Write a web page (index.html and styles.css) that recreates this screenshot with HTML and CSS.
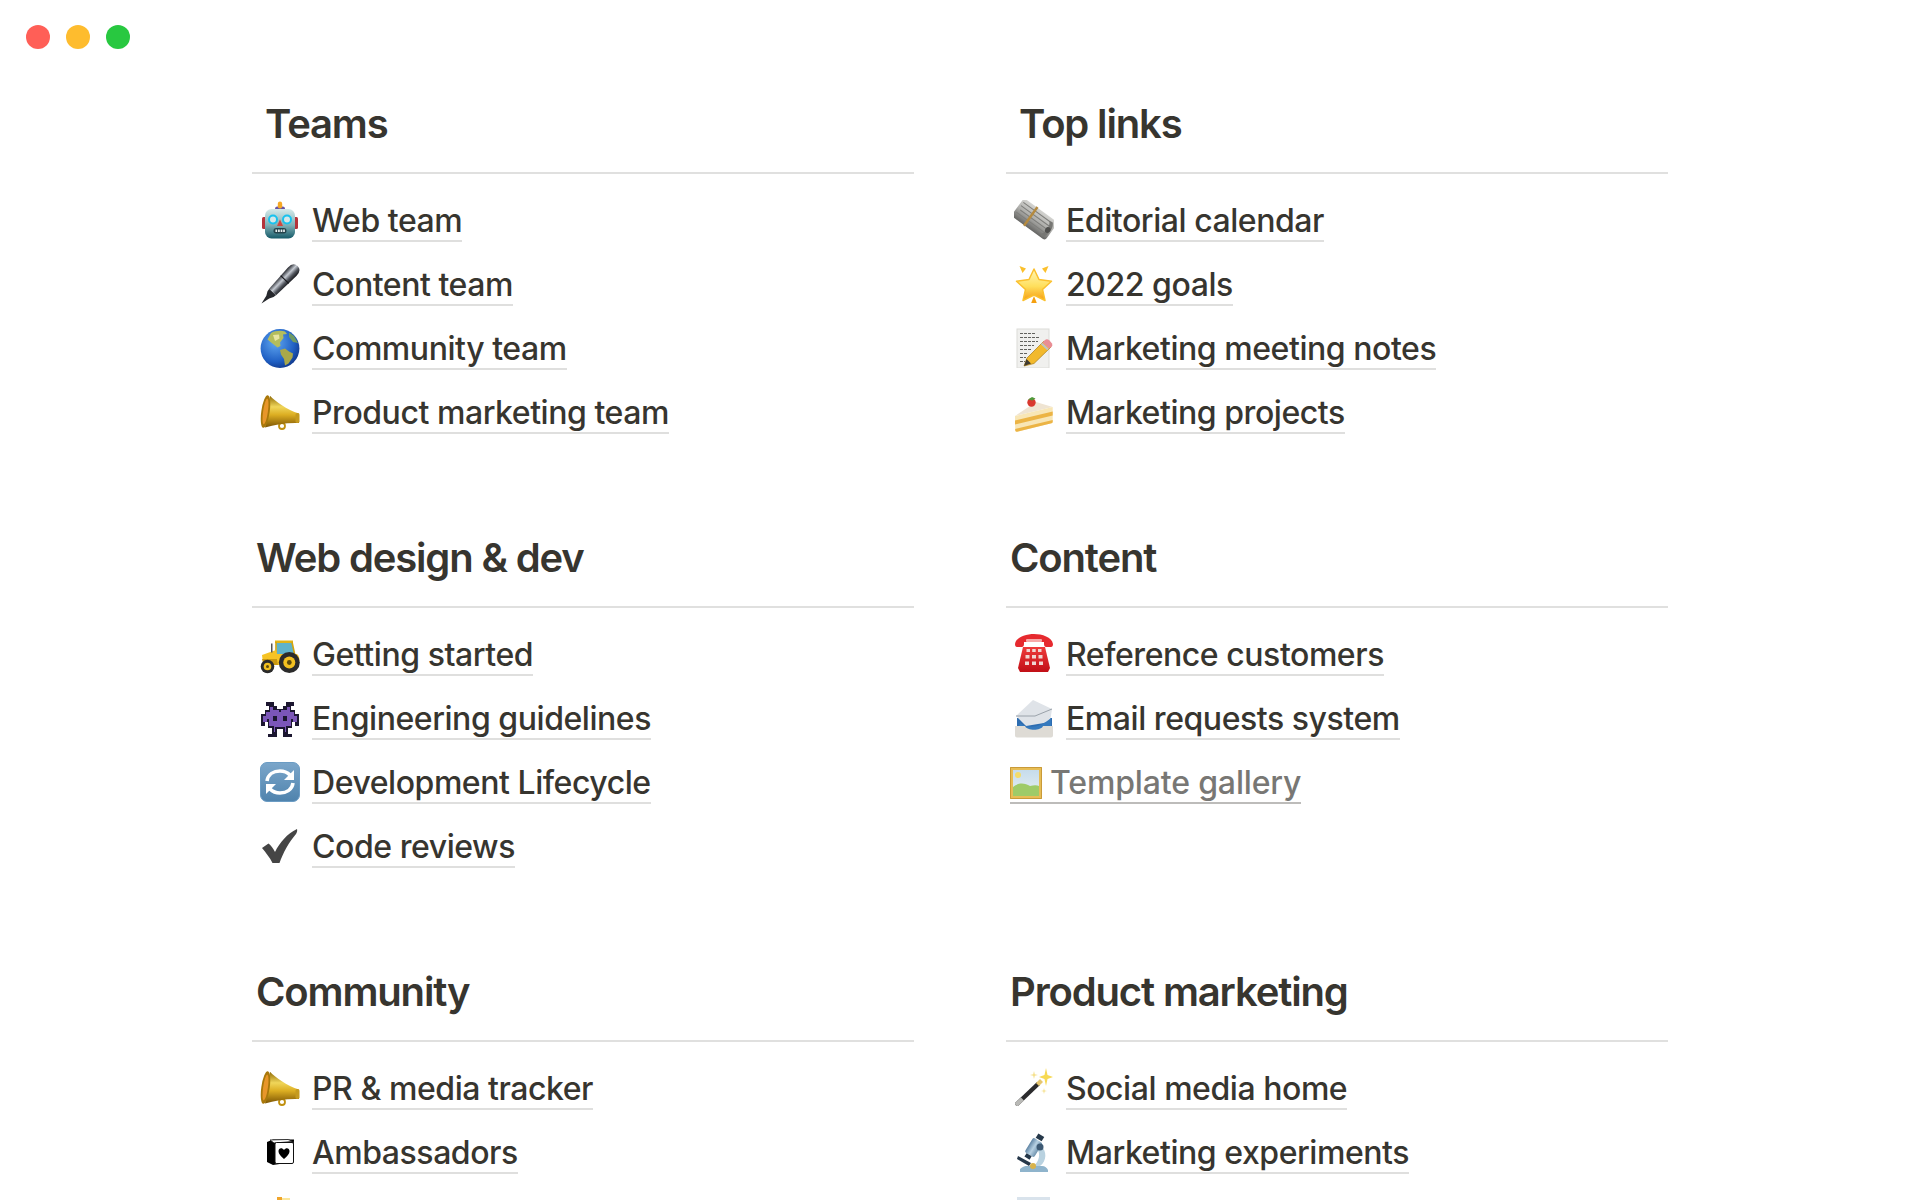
FILE: index.html
```html
<!DOCTYPE html>
<html lang="en">
<head>
<meta charset="utf-8">
<title>Marketing wiki</title>
<link rel="stylesheet" href="styles.css">
</head>
<body>
<svg class="sprite" aria-hidden="true">
<defs>
<linearGradient id="gHead" x1="0" y1="0" x2="0" y2="1"><stop offset="0" stop-color="#d6eaea"/><stop offset=".55" stop-color="#7fb0b6"/><stop offset="1" stop-color="#155a68"/></linearGradient>
<linearGradient id="gPen" x1="0" y1="0" x2="1" y2="0"><stop offset="0" stop-color="#23252b"/><stop offset=".4" stop-color="#c6cbd3"/><stop offset=".7" stop-color="#50545c"/><stop offset="1" stop-color="#17181c"/></linearGradient>
<radialGradient id="gGlobe" cx=".38" cy=".35" r=".75"><stop offset="0" stop-color="#5fa6f0"/><stop offset=".65" stop-color="#2060c4"/><stop offset="1" stop-color="#0d2f80"/></radialGradient>
<linearGradient id="gGold" x1="0" y1="0" x2="0" y2="1"><stop offset="0" stop-color="#8f6a06"/><stop offset=".35" stop-color="#f0d65a"/><stop offset=".6" stop-color="#dcae22"/><stop offset="1" stop-color="#7d5503"/></linearGradient>
<linearGradient id="gNews" x1="0" y1="0" x2="0" y2="1"><stop offset="0" stop-color="#d4d4d1"/><stop offset=".5" stop-color="#aeaeab"/><stop offset="1" stop-color="#666664"/></linearGradient>
<linearGradient id="gStar" x1="0" y1="0" x2="0" y2="1"><stop offset="0" stop-color="#fff6b8"/><stop offset=".55" stop-color="#ffdf5c"/><stop offset="1" stop-color="#f59c12"/></linearGradient>
<linearGradient id="gRefresh" x1="0" y1="0" x2="0" y2="1"><stop offset="0" stop-color="#7ba6ca"/><stop offset="1" stop-color="#4f83ad"/></linearGradient>
<linearGradient id="gPhone" x1="0" y1="0" x2="0" y2="1"><stop offset="0" stop-color="#ee3b3b"/><stop offset="1" stop-color="#c10f16"/></linearGradient>
<linearGradient id="gSky" x1="0" y1="0" x2="0" y2="1"><stop offset="0" stop-color="#c6dcec"/><stop offset="1" stop-color="#e6eff2"/></linearGradient>
<linearGradient id="gScope" x1="0" y1="0" x2="1" y2="0"><stop offset="0" stop-color="#5f84a4"/><stop offset=".5" stop-color="#b7d0e2"/><stop offset="1" stop-color="#6f93ae"/></linearGradient>
<symbol id="i-robot" viewBox="0 0 40 40">
<rect x="2" y="17" width="5" height="12" rx="1.500" fill="#b5333a"/><rect x="33" y="17" width="5" height="12" rx="1.500" fill="#b5333a"/>
<ellipse cx="20" cy="8.500" rx="5" ry="2.200" fill="#6a55a3"/><rect x="17.800" y="1.500" width="4.400" height="7" rx="2.200" fill="#f6a824"/>
<rect x="5" y="9" width="30" height="29.500" rx="6.500" fill="url(#gHead)"/>
<circle cx="13" cy="19.500" r="4" fill="#d3e8ea" stroke="#17c2ee" stroke-width="2"/><circle cx="27" cy="19.500" r="4" fill="#d3e8ea" stroke="#17c2ee" stroke-width="2"/>
<path d="M20 19.500l3 6.500h-6z" fill="#d2453f"/>
<rect x="13.500" y="28" width="13" height="5.500" rx="2.700" fill="#24434b"/>
<path d="M16.300 29.500v2.600M18.900 29.500v2.600M21.500 29.500v2.600M24 29.500v2.600" stroke="#e8f0f0" stroke-width="1.700"/>
</symbol>
<symbol id="i-pen" viewBox="0 0 40 40">
<g transform="translate(1.500 39.500) rotate(44)">
<path d="M0 0L-2 -9L-4.200 -13L-4.600 -16H4.600L4.200 -13L2 -9Z" fill="#26282d"/>
<path d="M-4.800 -16L-6 -44Q-6 -52 0 -52Q6 -52 6 -44L4.800 -16Z" fill="url(#gPen)"/>
<rect x="-5.600" y="-34" width="11.200" height="1.200" fill="#17181c"/>
</g>
</symbol>
<symbol id="i-globe" viewBox="0 0 40 40">
<circle cx="20" cy="20.500" r="19.400" fill="url(#gGlobe)"/>
<path d="M11 5C14 3 21 2 25 3.500L27 6L23 6.500L23.500 10L20 14.500L20.500 18L17.500 19.500L15 17.500L10.500 14L7.500 11.500Z" fill="#b4bd5c"/>
<path d="M13 7L19 6.500L19.500 10.500L15 13Z" fill="#e8e5a2"/>
<path d="M20 22L25 20.500L29 23.500L33 25.500L32.500 29.500L28.500 35.500L25 37.500L24 31L21 26.500Z" fill="#a9a84a"/>
<path d="M29 4.500L34 8L38 15L33 14L29 9Z" fill="#6f9a62"/>
</symbol>
<symbol id="i-mega" viewBox="0 0 40 40">
<circle cx="22" cy="34" r="3" fill="none" stroke="#c0900f" stroke-width="1.800"/>
<path d="M10 3.700C15 9 27 18 39 21.500V31C27 30.500 15 32.500 5 35.500Z" fill="url(#gGold)"/>
<ellipse cx="5.500" cy="19.500" rx="4.200" ry="16.500" transform="rotate(8 5.500 19.500)" fill="#a9780a"/>
<ellipse cx="5.500" cy="19.500" rx="2.400" ry="13" transform="rotate(8 5.500 19.500)" fill="#e8962a"/>
<rect x="35.500" y="21" width="4" height="10" rx="1.800" fill="#c59a1e"/>
</symbol>
<symbol id="i-news" viewBox="0 0 40 40">
<g transform="rotate(36 20 20)">
<rect x="-1" y="8" width="42" height="22" rx="3" fill="url(#gNews)"/>
<path d="M1 12H37M1 16H37M3 20H39M1 24H36" stroke="#7e7e7b" stroke-width="1"/>
<rect x="14" y="7.500" width="2.400" height="23" fill="#b58a3f"/>
<path d="M36 11C41 13 41 26 36 29L33 28C37 24 37 15 33 12Z" fill="#777774"/>
<ellipse cx="37" cy="20" rx="2.600" ry="3" fill="#4f4f4d"/>
</g>
</symbol>
<symbol id="i-star" viewBox="0 0 40 40">
<path d="M20 5L25 15.500L37.500 17.200L28.500 25.500L31 36.500L20 31L9 36.500L11.500 25.500L2.500 17.200L15 15.500Z" fill="url(#gStar)" stroke="#fbc02d" stroke-width="1.500" stroke-linejoin="round"/>
<path d="M5.500 2L12 4.500L8.500 9ZM34.500 2L28 4.500L31.500 9Z" fill="#fbc02d"/>
<path d="M20 32L22.800 39H17.200Z" fill="#f5a00f"/>
</symbol>
<symbol id="i-memo" viewBox="0 0 40 40">
<rect x="3" y="1" width="32" height="39" fill="#f0f0ee" stroke="#dcdcd8"/>
<path d="M6 5.500H22M6 9.500H26M6 13.500H24M6 17.500H20M6 21.500H17M6 25.500H14M6 29.500H12M6 33.500H11" stroke="#62625e" stroke-width="1" stroke-dasharray="3 1"/>
<path d="M10 38L13 30L30 13L37 19L20 35.500Z" fill="#f2b92d" stroke="#a97c16" stroke-width=".7"/>
<path d="M28.500 14.500L31 12Q33 10.500 35.500 12.500L38 15.500Q39 17.500 37.500 19L35 20.500Z" fill="#e98d94"/>
<path d="M27.500 15.500L34 21.500" stroke="#bfc2c6" stroke-width="2.200"/>
<path d="M10 38L12.500 31L17 35.500Z" fill="#3f3a30"/>
</symbol>
<symbol id="i-cake" viewBox="0 0 40 40">
<path d="M1 24L22 10L38.700 15Z" fill="#efe4d2"/>
<circle cx="17.500" cy="10.500" r="4.200" fill="#d9382f"/><path d="M14 7.500L18 5L21.500 6.500L18.500 8.500Z" fill="#4f9a3a"/>
<path d="M1 24L38.700 15V30Q38.700 31 37.500 31.300L3 39.700Q1.200 40 1.200 38Z" fill="#f8e6b6"/>
<path d="M1 28.500L38.700 19.500V23.500L1 32.500ZM1.200 37L38.700 28V30Q38.700 31 37.500 31.300L3 39.700Q1.200 40 1.200 38Z" fill="#ecb445"/>
</symbol>
<symbol id="i-tractor" viewBox="0 0 40 40">
<path d="M16 8H32L35 22H17Z" fill="#5fb3c9"/>
<path d="M15 6.500H33V9H15Z" fill="#e2b416"/>
<path d="M16 8V22M32 8L35 22" stroke="#d2a40f" stroke-width="1.600" fill="none"/>
<path d="M2 21L16 16L19 29H3Z" fill="#f6c324"/><path d="M2 25H19V31H4Z" fill="#c99810"/>
<path d="M16 20H37Q39.500 22 39.500 27L30 31H18Z" fill="#f6c324"/>
<rect x="11" y="9.500" width="1.500" height="9" fill="#555"/>
<circle cx="29.300" cy="28.500" r="10.500" fill="#2b2b2b"/><circle cx="29.300" cy="28.500" r="6" fill="#f3c01f"/><circle cx="29.300" cy="28.500" r="2.400" fill="#5d4a0c"/>
<circle cx="7.500" cy="32.500" r="6.800" fill="#2b2b2b"/><circle cx="7.500" cy="32.500" r="3.800" fill="#f3c01f"/><circle cx="7.500" cy="32.500" r="1.500" fill="#5d4a0c"/>
</symbol>
<symbol id="i-invader" viewBox="0 0 40 40">
<path d="M6 4H14V8H17V11H23V8H26V4H34V8H31V12H35V16H39V28H35V24H32V30H28V36H32V39H23V31H17V39H8V36H12V30H8V24H5V28H1V16H5V12H9V8H6Z" fill="#1c1730"/>
<path d="M10 9H13V12H19V14H21V12H27V9H30V14H34V18H37V24H33V21H31V28H26V34H25V29H15V34H14V28H9V21H7V24H3V18H6V14H10Z" fill="#7b56b8"/>
<rect x="13" y="18" width="4" height="5" fill="#1c1730"/><rect x="23" y="18" width="4" height="5" fill="#1c1730"/>
</symbol>
<symbol id="i-refresh" viewBox="0 0 40 40">
<rect x=".5" y=".5" width="39" height="39" rx="6.500" fill="url(#gRefresh)" stroke="#6b9cc4"/>
<path d="M7 19C8 12 14 9 20 9C25 9 28 11 30 13" fill="none" stroke="#fff" stroke-width="3.600"/>
<path d="M34 8V18H24Z" fill="#fff"/>
<path d="M33 21C32 28 26 31 20 31C15 31 12 29 10 27" fill="none" stroke="#fff" stroke-width="3.600"/>
<path d="M6 32V22H16Z" fill="#fff"/>
</symbol>
<symbol id="i-check" viewBox="0 0 40 40">
<path d="M2 22L8.500 17.500Q12 20 15 26C20 16 27 8 37 3C37.500 5 37 6 36 8C29 16 23 27 19.500 37H12.500C9.500 31 6 27 2 22Z" fill="#454545"/>
</symbol>
<symbol id="i-phone" viewBox="0 0 40 40">
<path d="M6 38L4 34L9 13H31L36 34L34 38Z" fill="url(#gPhone)"/>
<path d="M1 10C2 3 12 0 20 0C28 0 38 3 39 10Q39 13 37 13H32C31 13 30 12 30 10V8H10V10C10 12 9 13 8 13H3Q1 13 1 10Z" fill="#e62a2f"/>
<rect x="12" y="5" width="16" height="3" rx="1" fill="#f7a9a9"/>
<g fill="#f0d6d2"><rect x="12.500" y="15" width="3.500" height="3"/><rect x="18.200" y="15" width="3.500" height="3"/><rect x="24" y="15" width="3.500" height="3"/><rect x="11.500" y="21" width="4" height="3.500"/><rect x="18" y="21" width="4" height="3.500"/><rect x="24.500" y="21" width="4" height="3.500"/><rect x="11" y="27.500" width="4" height="3.500"/><rect x="18" y="27.500" width="4" height="3.500"/><rect x="25" y="27.500" width="4" height="3.500"/></g>
</symbol>
<symbol id="i-inbox" viewBox="0 0 40 40">
<path d="M3 20H38V32H3Z" fill="#2d6cb0"/>
<path d="M2 18L19 2L38 11L36 24L12 28Z" fill="#dfe3e8"/>
<path d="M2 18L21 18L38 11" fill="none" stroke="#9aa2aa" stroke-width="1"/>
<path d="M6 25C14 31 26 30 37 20V32H4Z" fill="#3579bd"/>
<path d="M1 28H11C13 33 27 33 29 28H39V37.500Q39 39.500 37 39.500H3Q1 39.500 1 37.500Z" fill="#dedbd5"/>
</symbol>
<symbol id="i-pic" viewBox="0 0 32 32">
<rect width="32" height="32" fill="#e7bd55"/>
<rect x="3" y="3" width="26" height="26" fill="url(#gSky)"/>
<circle cx="8" cy="8" r="3" fill="#f3dc6a"/>
<path d="M3 20C9 15 15 16 20 19C24 18 27 18 29 19V29H3Z" fill="#9ecb68"/>
<path d="M.5 .5H31.500V31.500H.5Z" fill="none" stroke="#c99a38"/>
</symbol>
<symbol id="i-wand" viewBox="0 0 40 40">
<path d="M1 35L23 14L26 17L4 38Q1 38 1 35Z" fill="#2b2b2d"/>
<path d="M1 35L7 29.500L10 32.500L4 38Q1 38 1 35Z" fill="#b9b9b6"/>
<path d="M22 15L26 11L29 14L25 18Z" fill="#e6c66e"/>
<path d="M32 0L33.500 7L39 9L33.500 11L32 18L30.500 11L25 9L30.500 7Z" fill="#f7d952"/>
<path d="M20 3L20.800 6.200L24 7L20.800 7.800L20 11L19.200 7.800L16 7L19.200 6.200Z" fill="#f5e08a"/>
<path d="M30 20L30.600 22.400L33 23L30.600 23.600L30 26L29.400 23.600L27 23L29.400 22.400Z" fill="#f5e08a"/>
</symbol>
<symbol id="i-scope" viewBox="0 0 40 40">
<path d="M6 37C10 33 14 34 16 34H28C31 34 33 36 34 38V40H6Z" fill="#8fb4cc"/>
<path d="M27 14C33 19 33 29 26 34H20C25 29 27 22 23 17Z" fill="#b9d2e0"/>
<g transform="rotate(32 20 14)"><rect x="15" y="7" width="11" height="17" rx="2" fill="url(#gScope)"/><rect x="17" y="1" width="7" height="5" fill="#26384a"/><rect x="17.500" y="24" width="6" height="4" fill="#26384a"/></g>
<circle cx="26" cy="15" r="3.500" fill="#3e5a74"/>
<path d="M4 24L17 31L15 34L3 27Z" fill="#26384a"/>
<circle cx="19" cy="34" r="3" fill="#d8b24a"/>
</symbol>
<symbol id="i-heart" viewBox="0 0 40 40">
<path d="M7 10L13 7.500H34L33 30L13 33L7 30Z" fill="#000"/>
<path d="M10 8L28 7.500L33 9.500L14 11Z" fill="#fff" stroke="#111" stroke-width=".8"/>
<rect x="15" y="10.500" width="18.500" height="21" rx="1.500" fill="#fff" stroke="#111"/>
<path d="M24 27C19 23 18.500 20.500 18.500 19C18.500 16 22 15 24 18C26 15 29.500 16 29.500 19C29.500 20.500 29 23 24 27Z" fill="#000"/>
</symbol>
<symbol id="i-partial-a" viewBox="0 0 40 40">
<path d="M17 1H22V10H17Z" fill="#f0a52c"/><path d="M22 2H30V10H22Z" fill="#fbe69a"/>
</symbol>
<symbol id="i-partial-b" viewBox="0 0 40 40">
<rect x="3" y="1" width="33" height="38" fill="#d9e3ec"/>
</symbol>
</defs>
</svg>

<header class="chrome">
  <span class="dot dot-red"></span><span class="dot dot-yellow"></span><span class="dot dot-green"></span>
</header>

<main class="grid">
  <section class="section">
    <h2 class="title title-inset">Teams</h2>
    <ul class="list">
      <li class="row"><svg class="icon"><use href="#i-robot"/></svg><a class="link">Web team</a></li>
      <li class="row"><svg class="icon"><use href="#i-pen"/></svg><a class="link">Content team</a></li>
      <li class="row"><svg class="icon"><use href="#i-globe"/></svg><a class="link">Community team</a></li>
      <li class="row"><svg class="icon"><use href="#i-mega"/></svg><a class="link">Product marketing team</a></li>
    </ul>
  </section>
  <section class="section">
    <h2 class="title title-inset">Top links</h2>
    <ul class="list">
      <li class="row"><svg class="icon"><use href="#i-news"/></svg><a class="link">Editorial calendar</a></li>
      <li class="row"><svg class="icon"><use href="#i-star"/></svg><a class="link">2022 goals</a></li>
      <li class="row"><svg class="icon"><use href="#i-memo"/></svg><a class="link">Marketing meeting notes</a></li>
      <li class="row"><svg class="icon"><use href="#i-cake"/></svg><a class="link">Marketing projects</a></li>
    </ul>
  </section>
  <section class="section">
    <h2 class="title">Web design &amp; dev</h2>
    <ul class="list">
      <li class="row"><svg class="icon"><use href="#i-tractor"/></svg><a class="link">Getting started</a></li>
      <li class="row"><svg class="icon"><use href="#i-invader"/></svg><a class="link">Engineering guidelines</a></li>
      <li class="row"><svg class="icon"><use href="#i-refresh"/></svg><a class="link">Development Lifecycle</a></li>
      <li class="row"><svg class="icon"><use href="#i-check"/></svg><a class="link">Code reviews</a></li>
    </ul>
  </section>
  <section class="section">
    <h2 class="title">Content</h2>
    <ul class="list">
      <li class="row"><svg class="icon"><use href="#i-phone"/></svg><a class="link">Reference customers</a></li>
      <li class="row"><svg class="icon"><use href="#i-inbox"/></svg><a class="link">Email requests system</a></li>
      <li class="row row-template"><a class="link link-template"><svg class="icon-template"><use href="#i-pic"/></svg>Template gallery</a></li>
    </ul>
  </section>
  <section class="section">
    <h2 class="title">Community</h2>
    <ul class="list">
      <li class="row"><svg class="icon"><use href="#i-mega"/></svg><a class="link">PR &amp; media tracker</a></li>
      <li class="row"><svg class="icon"><use href="#i-heart"/></svg><a class="link">Ambassadors</a></li>
      <li class="row"><svg class="icon"><use href="#i-partial-a"/></svg></li>
    </ul>
  </section>
  <section class="section">
    <h2 class="title">Product marketing</h2>
    <ul class="list">
      <li class="row"><svg class="icon"><use href="#i-wand"/></svg><a class="link">Social media home</a></li>
      <li class="row"><svg class="icon"><use href="#i-scope"/></svg><a class="link">Marketing experiments</a></li>
      <li class="row"><svg class="icon"><use href="#i-partial-b"/></svg></li>
    </ul>
  </section>
</main>
</body>
</html>
```
FILE: styles.css
```css
html, body {
  margin: 0;
  height: 1200px;
  overflow: hidden;
  background: #fff;
}
body {
  font-family: Inter, "Liberation Sans", sans-serif;
  color: #37352f;
}
.sprite {
  position: absolute;
  width: 0;
  height: 0;
}
.chrome {
  display: flex;
  gap: 16px;
  padding: 25px 0 0 26px;
  height: 24px;
}
.dot {
  width: 24px;
  height: 24px;
  border-radius: 50%;
}
.dot-red { background: #ff5f57; }
.dot-yellow { background: #febc2e; }
.dot-green { background: #28c840; }
.grid {
  display: grid;
  grid-template-columns: 662px 662px;
  column-gap: 92px;
  margin: 45px 0 0 252px;
}
.section {
  height: 434px;
}
.title {
  margin: 0 0 18px;
  padding: 0 0 0 4px;
  height: 60px;
  font-size: 40px;
  line-height: 60px;
  font-weight: 600;
  letter-spacing: -1.15px;
}
.title-inset {
  padding-left: 13px;
}
.list {
  list-style: none;
  margin: 0;
  padding: 14px 0 0 8px;
  border-top: 2px solid #e0e0df;
}
.row {
  display: flex;
  gap: 12px;
  align-items: flex-start;
  height: 52px;
  padding-top: 12px;
}
.icon {
  flex: none;
  width: 40px;
  height: 40px;
}
.link {
  padding-top: 2px;
  font-size: 32px;
  line-height: 38px;
  font-weight: 450;
  letter-spacing: -0.45px;
  border-bottom: 2px solid #dfdfde;
}
.row-template {
  margin-left: -4px;
}
.link-template {
  display: flex;
  align-items: center;
  gap: 8px;
  color: #787774;
  font-weight: 500;
  letter-spacing: -0.15px;
  border-bottom-color: #bdbcba;
}
.icon-template {
  flex: none;
  width: 32px;
  height: 32px;
}
```
